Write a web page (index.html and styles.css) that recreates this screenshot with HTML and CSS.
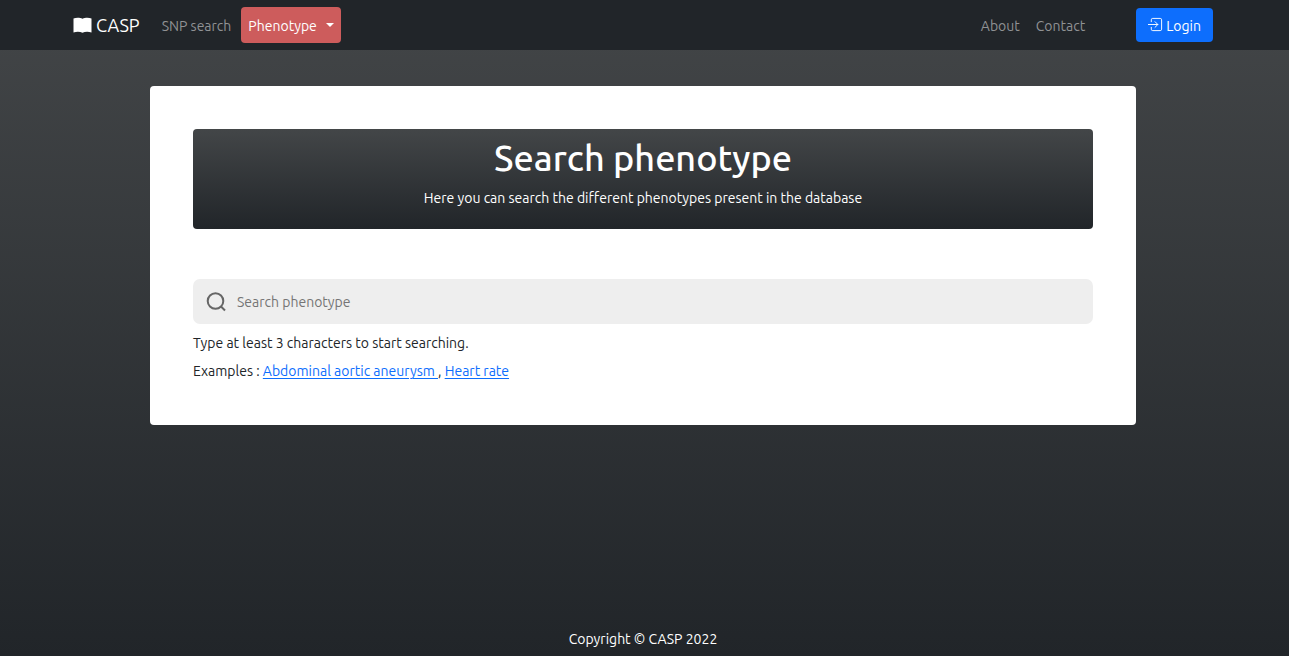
FILE: index.html
```
<!DOCTYPE html>
<html lang="en">
<head>
<meta charset="utf-8">
<meta name="viewport" content="width=device-width, initial-scale=1">
<title>CASP - Search phenotype</title>
<link rel="stylesheet" href="styles.css">
</head>
<body>
<header class="navbar">
  <nav class="navbar-inner">
    <a class="brand" href="#">
      <svg class="brand-icon" viewBox="0 0 19 17" aria-hidden="true"><path d="M.5 1.500C3 .4 7 .4 9.500 1.800 12 .4 16 .4 18.500 1.500V15.500C15.500 14.300 12 14.300 9.500 15.800 7 14.300 3.500 14.300 .5 15.500Z"/></svg>
      <span>CASP</span>
    </a>
    <a class="nav-link" href="#">SNP search</a>
    <button class="menu-button" type="button" aria-haspopup="true">Phenotype <span class="caret"></span></button>
    <div class="nav-end">
      <a class="nav-link" href="#">About</a>
      <a class="nav-link" href="#">Contact</a>
      <button class="login-button" type="button">
        <svg class="login-icon" viewBox="0 0 16 16" aria-hidden="true"><path d="M3.500 5V3q0-1.500 1.500-1.500h8q1.500 0 1.500 1.500v10q0 1.500-1.500 1.500H5q-1.500 0-1.500-1.500v-2M0 8h10.500M7.500 5l3 3-3 3"/></svg>
        <span>Login</span>
      </button>
    </div>
  </nav>
</header>
<main class="panel">
  <section class="banner">
    <h1 class="banner-title">Search phenotype</h1>
    <p class="banner-text">Here you can search the different phenotypes present in the database</p>
  </section>
  <form class="search">
    <label class="search-label" for="phenotype">
      <svg class="search-icon" viewBox="0 0 20 20" role="img" aria-label="Search phenotype"><circle cx="9.500" cy="9" r="7.800"/><path d="M15 14.500 19 18.500"/></svg>
    </label>
    <input class="search-input" id="phenotype" type="text" placeholder="Search phenotype">
  </form>
  <p class="hint">Type at least 3 characters to start searching.</p>
  <p class="hint">Examples : <a class="example" href="#">Abdominal aortic aneurysm&nbsp;</a>, <a class="example" href="#">Heart rate</a></p>
</main>
<footer class="footer">Copyright © CASP 2022</footer>
</body>
</html>
```
FILE: styles.css
```
* {
  box-sizing: border-box;
}

body {
  display: flex;
  flex-direction: column;
  min-height: 100vh;
  margin: 0;
  background: linear-gradient(#434648, #212529);
  color: #212529;
  font-family: Ubuntu, "Noto Sans", sans-serif;
  font-size: 14px;
  line-height: 20px;
}

button,
input {
  font: inherit;
}

.navbar {
  padding: 7px 76px 7px 73px;
  background: #212529;
}

.navbar-inner {
  display: flex;
  align-items: center;
  height: 36px;
}

.brand {
  display: flex;
  align-items: center;
  gap: 4px;
  margin-right: 14px;
  color: #fff;
  font-size: 18px;
  text-decoration: none;
}

.brand-icon {
  width: 19px;
  height: 17px;
  fill: currentColor;
}

.nav-link {
  padding: 9px 8px 7px;
  color: #909294;
  text-decoration: none;
}

.menu-button {
  display: flex;
  align-items: center;
  gap: 9px;
  height: 36px;
  margin-left: 2px;
  padding: 2px 7px 0;
  border: 0;
  border-radius: 4px;
  background: #cd5c5c;
  color: #fff;
}

.caret {
  margin-bottom: 2px;
  border: 4px solid transparent;
  border-top-color: currentColor;
  border-bottom: 0;
}

.nav-end {
  display: flex;
  align-items: center;
  margin-left: auto;
}

.login-button {
  display: flex;
  align-items: center;
  gap: 3px;
  height: 34px;
  margin-left: 43px;
  padding: 2px 12px 0;
  border: 0;
  border-radius: 4px;
  background: #0d6efd;
  color: #fff;
}

.login-icon {
  width: 15px;
  height: 15px;
  margin-bottom: 3px;
  fill: none;
  stroke: currentColor;
  stroke-linecap: round;
  stroke-linejoin: round;
}

.panel {
  margin: 36px 153px 0 150px;
  padding: 43px 43px 44px;
  border-radius: 4px;
  background: #fff;
}

.banner {
  margin-bottom: 50px;
  padding: 7px 12px 21px;
  border-radius: 4px;
  background: linear-gradient(#434648, #212529);
  color: #fff;
  text-align: center;
}

.banner-title {
  margin: 0 0 9px;
  font-size: 36px;
  font-weight: 500;
  line-height: 43px;
}

.banner-text {
  margin: 0;
}

.search {
  display: flex;
  align-items: center;
  height: 45px;
  margin-bottom: 9px;
  padding-left: 13px;
  border-radius: 7px;
  background: #eee;
}

.search-label {
  display: flex;
}

.search-icon {
  width: 20px;
  height: 20px;
  fill: none;
  stroke: #666;
  stroke-width: 2;
}

.search-input {
  flex: 1;
  min-width: 0;
  height: 45px;
  padding: 0 11px;
  border: 0;
  outline: 0;
  background: transparent;
  color: #212529;
}

.search-input::placeholder {
  color: #757575;
}

.hint {
  margin: 0 0 8px;
}

.hint:last-child {
  margin-bottom: 0;
}

.example {
  color: #0d6efd;
  text-underline-offset: 2px;
}

.footer {
  margin-top: auto;
  padding: 0 3px 7px 0;
  color: #fff;
  text-align: center;
}
```
